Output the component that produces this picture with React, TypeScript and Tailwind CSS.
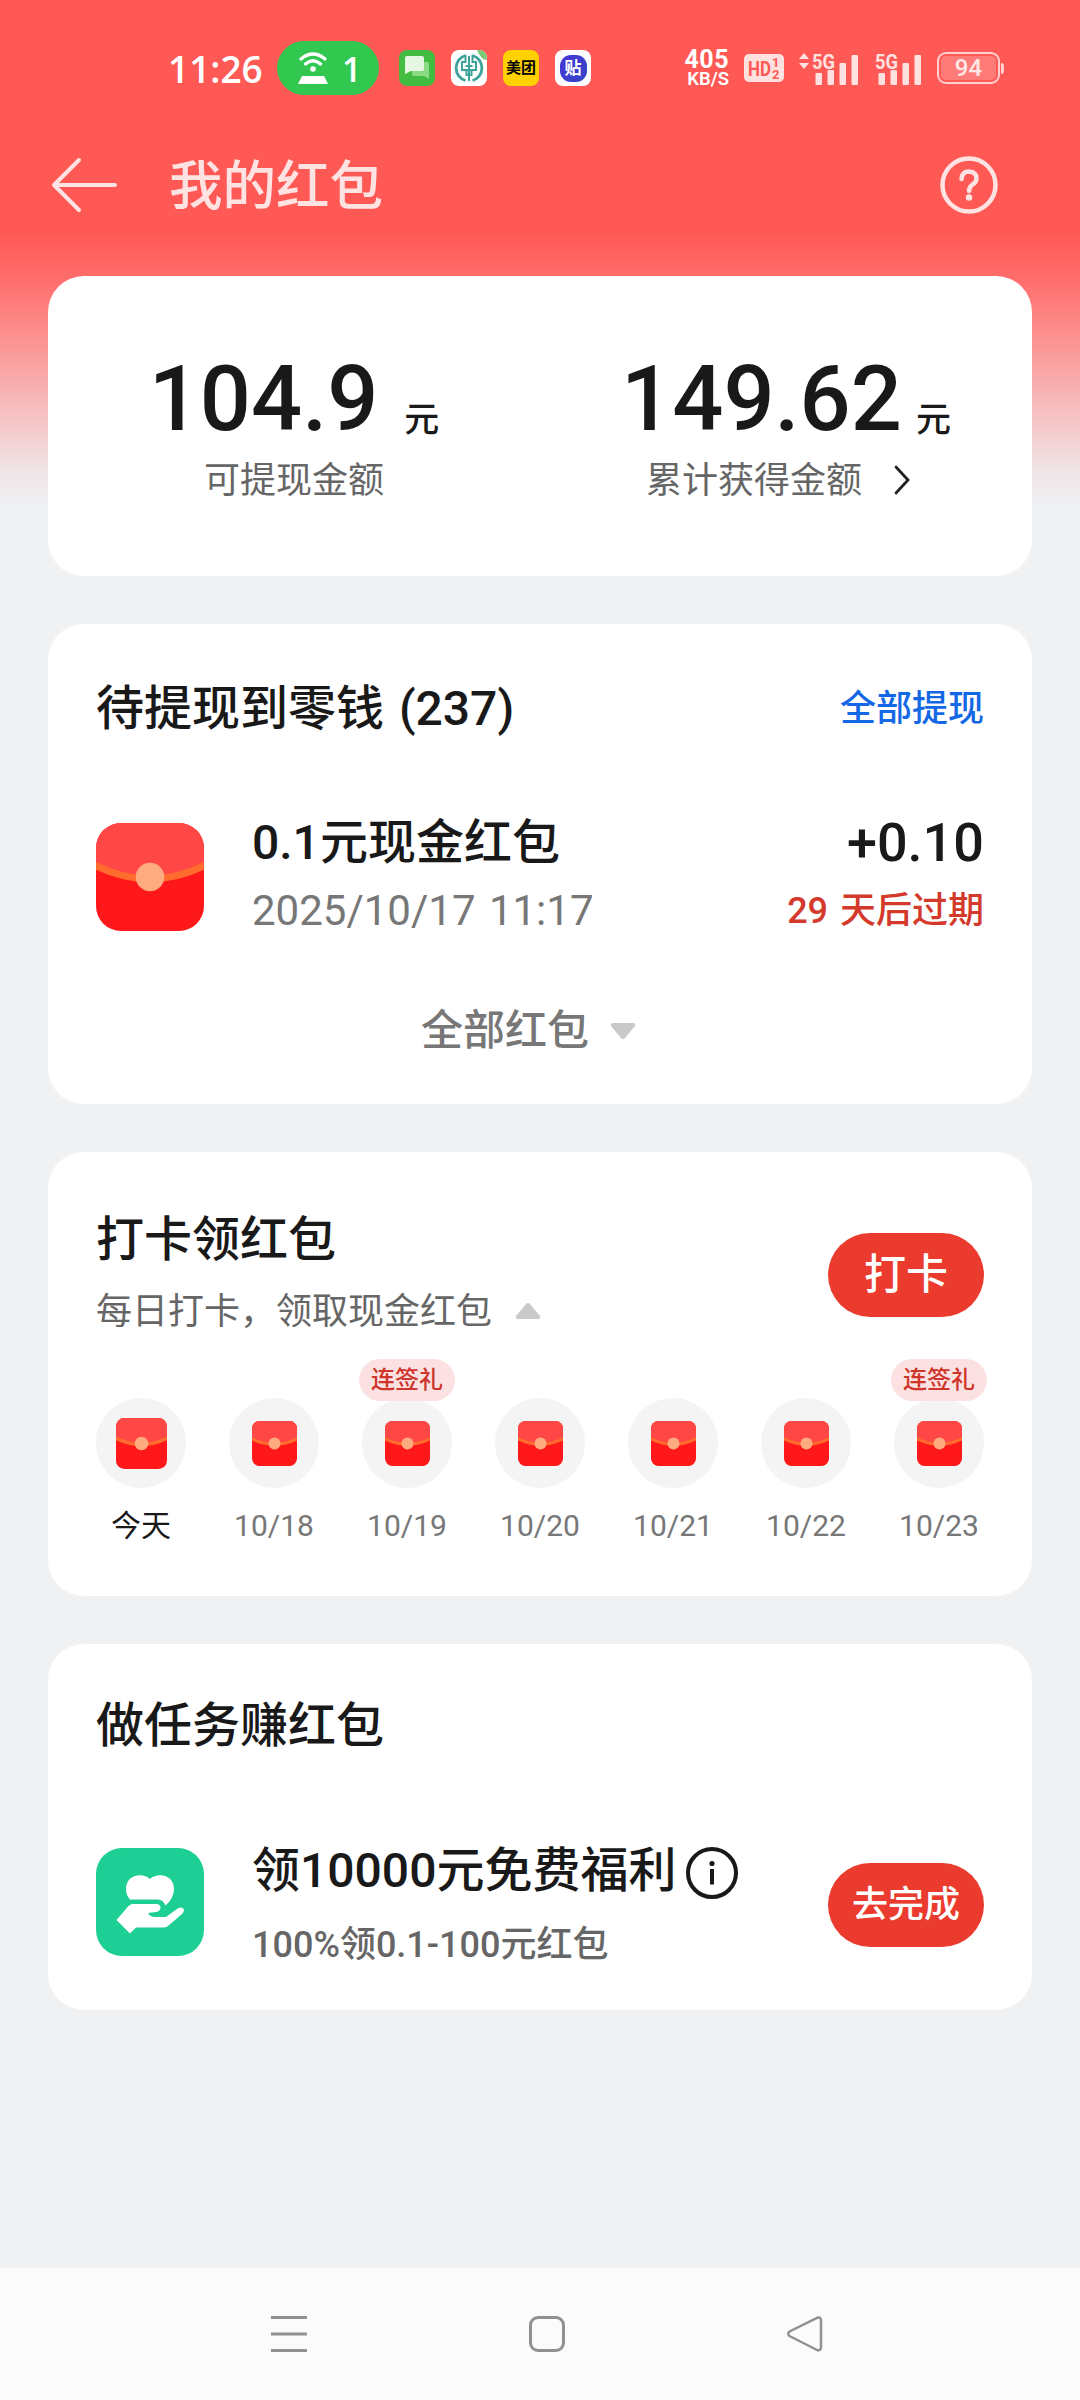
import { useState } from "react";

type Day = {
    label: string;
    bonus?: boolean;
};

type EnvelopeProps = {
    size: number;
    radius: number;
};

const days: Day[] = [
    { label: "今天" },
    { label: "10/18" },
    { label: "10/19", bonus: true },
    { label: "10/20" },
    { label: "10/21" },
    { label: "10/22" },
    { label: "10/23", bonus: true },
];

function Envelope({ size, radius }: EnvelopeProps) {
    const clip = `envelope-${size}`;

    return (
        <svg width={size} height={size} viewBox="0 0 108 108" className="block shrink-0">
            <clipPath id={clip}>
                <rect width="108" height="108" rx={radius} />
            </clipPath>
            <g clipPath={`url(#${clip})`}>
                <rect width="108" height="108" fill="#ff181a" />
                <path d="M0 0H108V43Q54 71 0 43Z" fill="#ff4845" />
                <path d="M-2 42Q54 70 110 42" fill="none" stroke="#ff6c2d" strokeWidth="7" />
                <circle cx="54" cy="54" r="14.3" fill="#ffab80" />
            </g>
        </svg>
    );
}

function Signal({ arrows }: { arrows?: boolean }) {
    return (
        <svg width="60" height="34" viewBox="0 0 60 34" className="block" fill="#ffe1e0">
            {arrows && <path d="M0 8L5 2L10 8ZM0 12L5 18L10 12Z" />}
            <text x="13" y="17.5" fontSize="21" fontWeight="700" textLength="23" lengthAdjust="spacingAndGlyphs" fontFamily="Roboto, sans-serif">5G</text>
            <rect x="16.5" y="22" width="6.5" height="12" rx="1" />
            <rect x="28.5" y="19" width="6.5" height="15" rx="1" />
            <rect x="40.5" y="12" width="6.5" height="22" rx="1" />
            <rect x="52.5" y="4" width="6.5" height="30" rx="1" />
        </svg>
    );
}

function StatusBar() {
    return (
        <div className="flex h-[136px] items-center pl-[168px] pr-[76px] text-white">
            <span className="w-[109px] font-['Open_Sans',sans-serif] text-[37px] font-semibold leading-none">11:26</span>
            <div className="flex h-[54px] w-[102px] items-center rounded-full bg-[#32c74f] pl-[21px]">
                <svg width="30" height="32" viewBox="0 0 30 32" fill="none" stroke="#fff" strokeWidth="3.2" strokeLinecap="round">
                    <path d="M3 7Q15 -3 27 7M7.5 12Q15 5.500 22.500 12" />
                    <circle cx="15" cy="17" r="2.8" fill="#fff" stroke="none" />
                    <path d="M4 24H26L30 32H0Z" fill="#fff" stroke="none" />
                </svg>
                <span className="ml-[14px] mt-[2px] font-['Open_Sans',sans-serif] text-[34px] font-semibold leading-none">1</span>
            </div>
            <div className="ml-[20px] flex gap-4">
                <svg width="36" height="36" viewBox="0 0 36 36">
                    <rect width="36" height="36" rx="8" fill="#43bc42" />
                    <path d="M16 12H28Q30 12 30 14V29L25 26H15Q13 26 13 24V15Z" fill="#8bdb84" />
                    <path d="M8 6H23Q25 6 25 8V19Q25 21 23 21H12L6 24V8Q6 6 8 6Z" fill="#e5f7e2" />
                </svg>
                <svg width="36" height="36" viewBox="0 0 36 36" fill="none" stroke="#3ba39a">
                    <rect width="36" height="36" rx="8" fill="#fff" stroke="none" />
                    <path d="M14.500 5.500A13 13 0 0 0 14.500 30.500M21.500 5.500A13 13 0 0 1 21.500 30.500" strokeWidth="2.800" />
                    <path d="M14.500 5V12H11V20H25V12H21.500V5M18 6V31M14.500 16H21.500M15.500 20V25H20.500V20" strokeWidth="2" />
                    <path d="M26 0Q36 -1 36 10Q30 10 26 0Z" fill="#79c977" stroke="none" />
                </svg>
                <div className="flex h-9 w-9 items-center justify-center rounded-lg bg-[#ffd100] text-[15px] font-bold leading-none text-black">美团</div>
                <div className="flex h-9 w-9 items-center justify-center rounded-lg bg-white">
                    <div className="flex h-[27px] w-[27px] items-center justify-center rounded-[11px] bg-linear-to-br from-[#4a34d6] to-[#3045c4] text-[17px] font-bold leading-none text-white">贴</div>
                </div>
            </div>
            <div className="ml-auto flex items-center">
                <div className="w-[46px] text-right font-bold">
                    <div className="text-[25px] leading-[21px] tracking-[0.5px]">405</div>
                    <div className="text-[18.5px] font-semibold leading-[18px]">KB/S</div>
                </div>
                <svg width="40" height="28" viewBox="0 0 40 28" className="ml-[15px]" fontFamily="Roboto, sans-serif" fontWeight="700">
                    <rect width="40" height="28" rx="5" fill="#ffe1e0" />
                    <text x="4" y="21.500" fontSize="21" textLength="23" lengthAdjust="spacingAndGlyphs" fill="#ff5956">HD</text>
                    <text x="28" y="13" fontSize="13" fill="#ff5956">1</text>
                    <text x="28" y="25" fontSize="13" fill="#ff5956">2</text>
                </svg>
                <div className="ml-[15px]"><Signal arrows /></div>
                <div className="ml-[3px]"><Signal /></div>
                <div className="ml-[15px] flex h-8 w-[63px] items-center justify-center rounded-[9px] border-2 border-[#ffd0ce] p-[2px]">
                    <div className="flex h-full w-full items-center justify-center rounded-[5px] bg-[#ff7b79] text-[24px] font-medium leading-none text-[#ffe8e7]">94</div>
                </div>
                <div className="ml-[1px] h-[11px] w-[3px] rounded-r bg-[#ffd0ce]" />
            </div>
        </div>
    );
}

function Header() {
    return (
        <div className="flex h-[98px] items-center pl-[51px] pr-[82px] text-[#ffe3e2]">
            <svg width="66" height="56" viewBox="0 0 66 56" fill="none" stroke="currentColor" strokeWidth="4" strokeLinecap="round" strokeLinejoin="round">
                <path d="M64 28H3M28 3L3 28L28 53" />
            </svg>
            <h1 className="ml-[52px] mt-[3px] text-[53.5px] font-medium leading-none">我的红包</h1>
            <svg width="58" height="58" viewBox="0 0 58 58" className="ml-auto" fill="none" stroke="currentColor" strokeWidth="4.500">
                <circle cx="29" cy="29" r="26.500" />
                <path d="M21.500 23Q22 15.500 29 15.500Q36.500 16 36.500 22.500Q36.500 26 32.500 28.500Q29 31 29 35" strokeLinecap="round" />
                <circle cx="29" cy="41.500" r="3.200" fill="currentColor" stroke="none" />
            </svg>
        </div>
    );
}

function App() {
    const [showDays] = useState(true);

    return (
        <div className="flex h-[2400px] w-[1080px] flex-col overflow-hidden bg-[#eff1f3] bg-[linear-gradient(180deg,#ff5956_0px,#ff5956_235px,#ff6e6c_280px,#f9a8a8_375px,#f1e4e6_470px,#eff1f3_505px)] font-[Roboto,'Noto_Sans_CJK_SC',sans-serif] text-[#191919]">
            <StatusBar />
            <Header />

            <main className="mt-[42px] flex flex-1 flex-col gap-12 px-12">
                <section className="flex h-[300px] rounded-[36px] bg-white pt-[78px]">
                    <div className="flex w-[492px] flex-col items-center">
                        <div className="flex items-baseline">
                            <span className="text-[90px] font-medium leading-[92px]">104.9</span>
                            <span className="ml-[26px] translate-y-0.5 text-[35px] font-medium leading-none">元</span>
                        </div>
                        <div className="mt-[15px] text-[36px] leading-[40px] text-[#666]">可提现金额</div>
                    </div>
                    <div className="flex w-[492px] flex-col items-center">
                        <div className="flex items-baseline">
                            <span className="text-[90px] font-medium leading-[92px]">149.62</span>
                            <span className="ml-[14px] translate-y-0.5 text-[35px] font-medium leading-none">元</span>
                        </div>
                        <div className="mt-[15px] flex items-center pr-[15px] text-[36px] leading-[40px] text-[#666]">
                            累计获得金额
                            <svg width="18" height="30" viewBox="0 0 18 30" className="-mt-[2px] ml-[31px]" fill="none" stroke="#222" strokeWidth="2.800" strokeLinecap="round">
                                <path d="M3 2L15 15L3 28" />
                            </svg>
                        </div>
                    </div>
                </section>

                <section className="h-[480px] rounded-[36px] bg-white px-12 pt-[55px]">
                    <div className="flex h-[60px] items-center justify-between">
                        <h2 className="text-[48px] font-medium leading-none [word-spacing:3px]">待提现到零钱 (237)</h2>
                        <button className="text-[36px] font-medium leading-none text-[#1468e6]">全部提现</button>
                    </div>
                    <div className="mt-[71px] flex items-center">
                        <Envelope size={108} radius={25} />
                        <div className="ml-12">
                            <div className="text-[48px] font-medium leading-[66px]">0.1元现金红包</div>
                            <div className="pt-[2px] text-[42px] leading-[66px] text-[#777] [word-spacing:3px]">2025/10/17 11:17</div>
                        </div>
                        <div className="ml-auto text-right">
                            <div className="text-[54px] font-medium leading-[66px]">+0.10</div>
                            <div className="pt-[2px] text-[36px] font-medium leading-[66px] text-[#d33a2c] [word-spacing:3px]">29 天后过期</div>
                        </div>
                    </div>
                    <div className="mt-[57px] flex h-[60px] items-center pl-[325px] text-[42px] font-medium leading-none text-[#777]">
                        全部红包
                        <svg width="26" height="17" viewBox="0 0 26 17" className="ml-[21px]" fill="#c9c9c9">
                            <path d="M2 0H24Q26 1 25 3L15 15Q13 17 11 15L1 3Q0 1 2 0Z" />
                        </svg>
                    </div>
                </section>

                <section className="h-[444px] rounded-[36px] bg-white px-12 pt-[54px]">
                    <div className="flex justify-between">
                        <div>
                            <h2 className="pt-px text-[48px] font-medium leading-[66px]">打卡领红包</h2>
                            <div className="mt-[9px] flex h-[60px] items-center text-[36px] leading-none text-[#666]">
                                每日打卡，领取现金红包
                                <svg width="26" height="17" viewBox="0 0 26 17" className="-mt-[3px] ml-[23px]" fill="#c9c9c9">
                                    <path d="M2 17H24Q26 16 25 14L15 2Q13 0 11 2L1 14Q0 16 2 17Z" />
                                </svg>
                            </div>
                        </div>
                        <button className="mt-[27px] h-[84px] w-[156px] rounded-full bg-[#ea3b2e] text-[42px] font-medium leading-none text-white">打卡</button>
                    </div>
                    {showDays && (
                        <div className="mt-[56px] flex justify-between">
                            {days.map((day, i) => (
                                <div key={day.label} className="relative flex w-[90px] flex-col items-center">
                                    <div className="flex h-[90px] w-[90px] items-center justify-center rounded-full bg-[#f4f4f4]">
                                        <Envelope size={i === 0 ? 51 : 45} radius={18} />
                                    </div>
                                    {day.bonus && (
                                        <span className="absolute -top-[39px] flex h-[42px] w-24 items-center justify-center rounded-full bg-[#fbe1e1] text-[24px] font-medium leading-none text-[#cf352b]">连签礼</span>
                                    )}
                                    <span className={i === 0 ? "mt-[18px] text-[30px] leading-10" : "mt-[18px] text-[30px] leading-10 text-[#777]"}>{day.label}</span>
                                </div>
                            ))}
                        </div>
                    )}
                </section>

                <section className="h-[366px] rounded-[36px] bg-white px-12 pt-[49px]">
                    <h2 className="text-[48px] font-medium leading-[66px]">做任务赚红包</h2>
                    <div className="mt-[89px] flex items-start">
                        <svg width="108" height="108" viewBox="0 0 108 108" className="block shrink-0">
                            <rect width="108" height="108" rx="26" fill="#1dcf94" />
                            <path d="M34 51.500Q30 47 30 41C30 27 46 24 54 31C62 24 78 27 78 41Q78 50 69.500 57.500Q67 51.500 62 51.500Z" fill="#fff" />
                            <path d="M36 56H61Q64.500 56.500 64.500 60Q64 63.500 60 64L52 65Q54 69 59 69H70L81 61Q86 58 88 61.500Q88 64 86 66L72 78Q70 79.500 67 79.500H40L34 85.500L20.500 72L32 58.500Q34 56.500 36 56Z" fill="#fff" />
                        </svg>
                        <div className="-mt-[10px] ml-12">
                            <div className="flex h-[66px] items-center text-[48px] font-medium leading-none">
                                领10000元免费福利
                                <svg width="52" height="52" viewBox="0 0 52 52" className="ml-[10px] mt-[3px]" fill="none" stroke="#191919" strokeWidth="4">
                                    <circle cx="26" cy="26" r="24" />
                                    <path d="M26 22V37.500" />
                                    <circle cx="26" cy="16.500" r="2.600" fill="#191919" stroke="none" />
                                </svg>
                            </div>
                            <div className="mt-[9px] text-[36px] font-medium leading-[64px] text-[#666]">100%领0.1-100元红包</div>
                        </div>
                        <button className="ml-auto mt-[15px] h-[84px] w-[156px] rounded-full bg-[#ea3b2e] text-[36px] font-medium leading-none text-white">去完成</button>
                    </div>
                </section>
            </main>

            <nav className="flex h-[132px] shrink-0 items-center gap-[222px] bg-[#fbfbfb] pl-[271px] text-[#919191]">
                <svg width="36" height="36" viewBox="0 0 36 36" fill="currentColor">
                    <path d="M0 0H36V3H0ZM0 16.500H36V19.500H0ZM0 33H36V36H0Z" />
                </svg>
                <div className="h-9 w-9 rounded-[9px] border-3 border-current" />
                <svg width="36" height="36" viewBox="0 0 36 36" fill="none" stroke="currentColor" strokeWidth="2.500" strokeLinejoin="round">
                    <path d="M30 1.800L2.500 15.500Q0 18 2.500 20L30 34Q34 35 34 31V4.500Q34 0.500 30 1.800Z" />
                </svg>
            </nav>
        </div>
    );
}

export default App;
